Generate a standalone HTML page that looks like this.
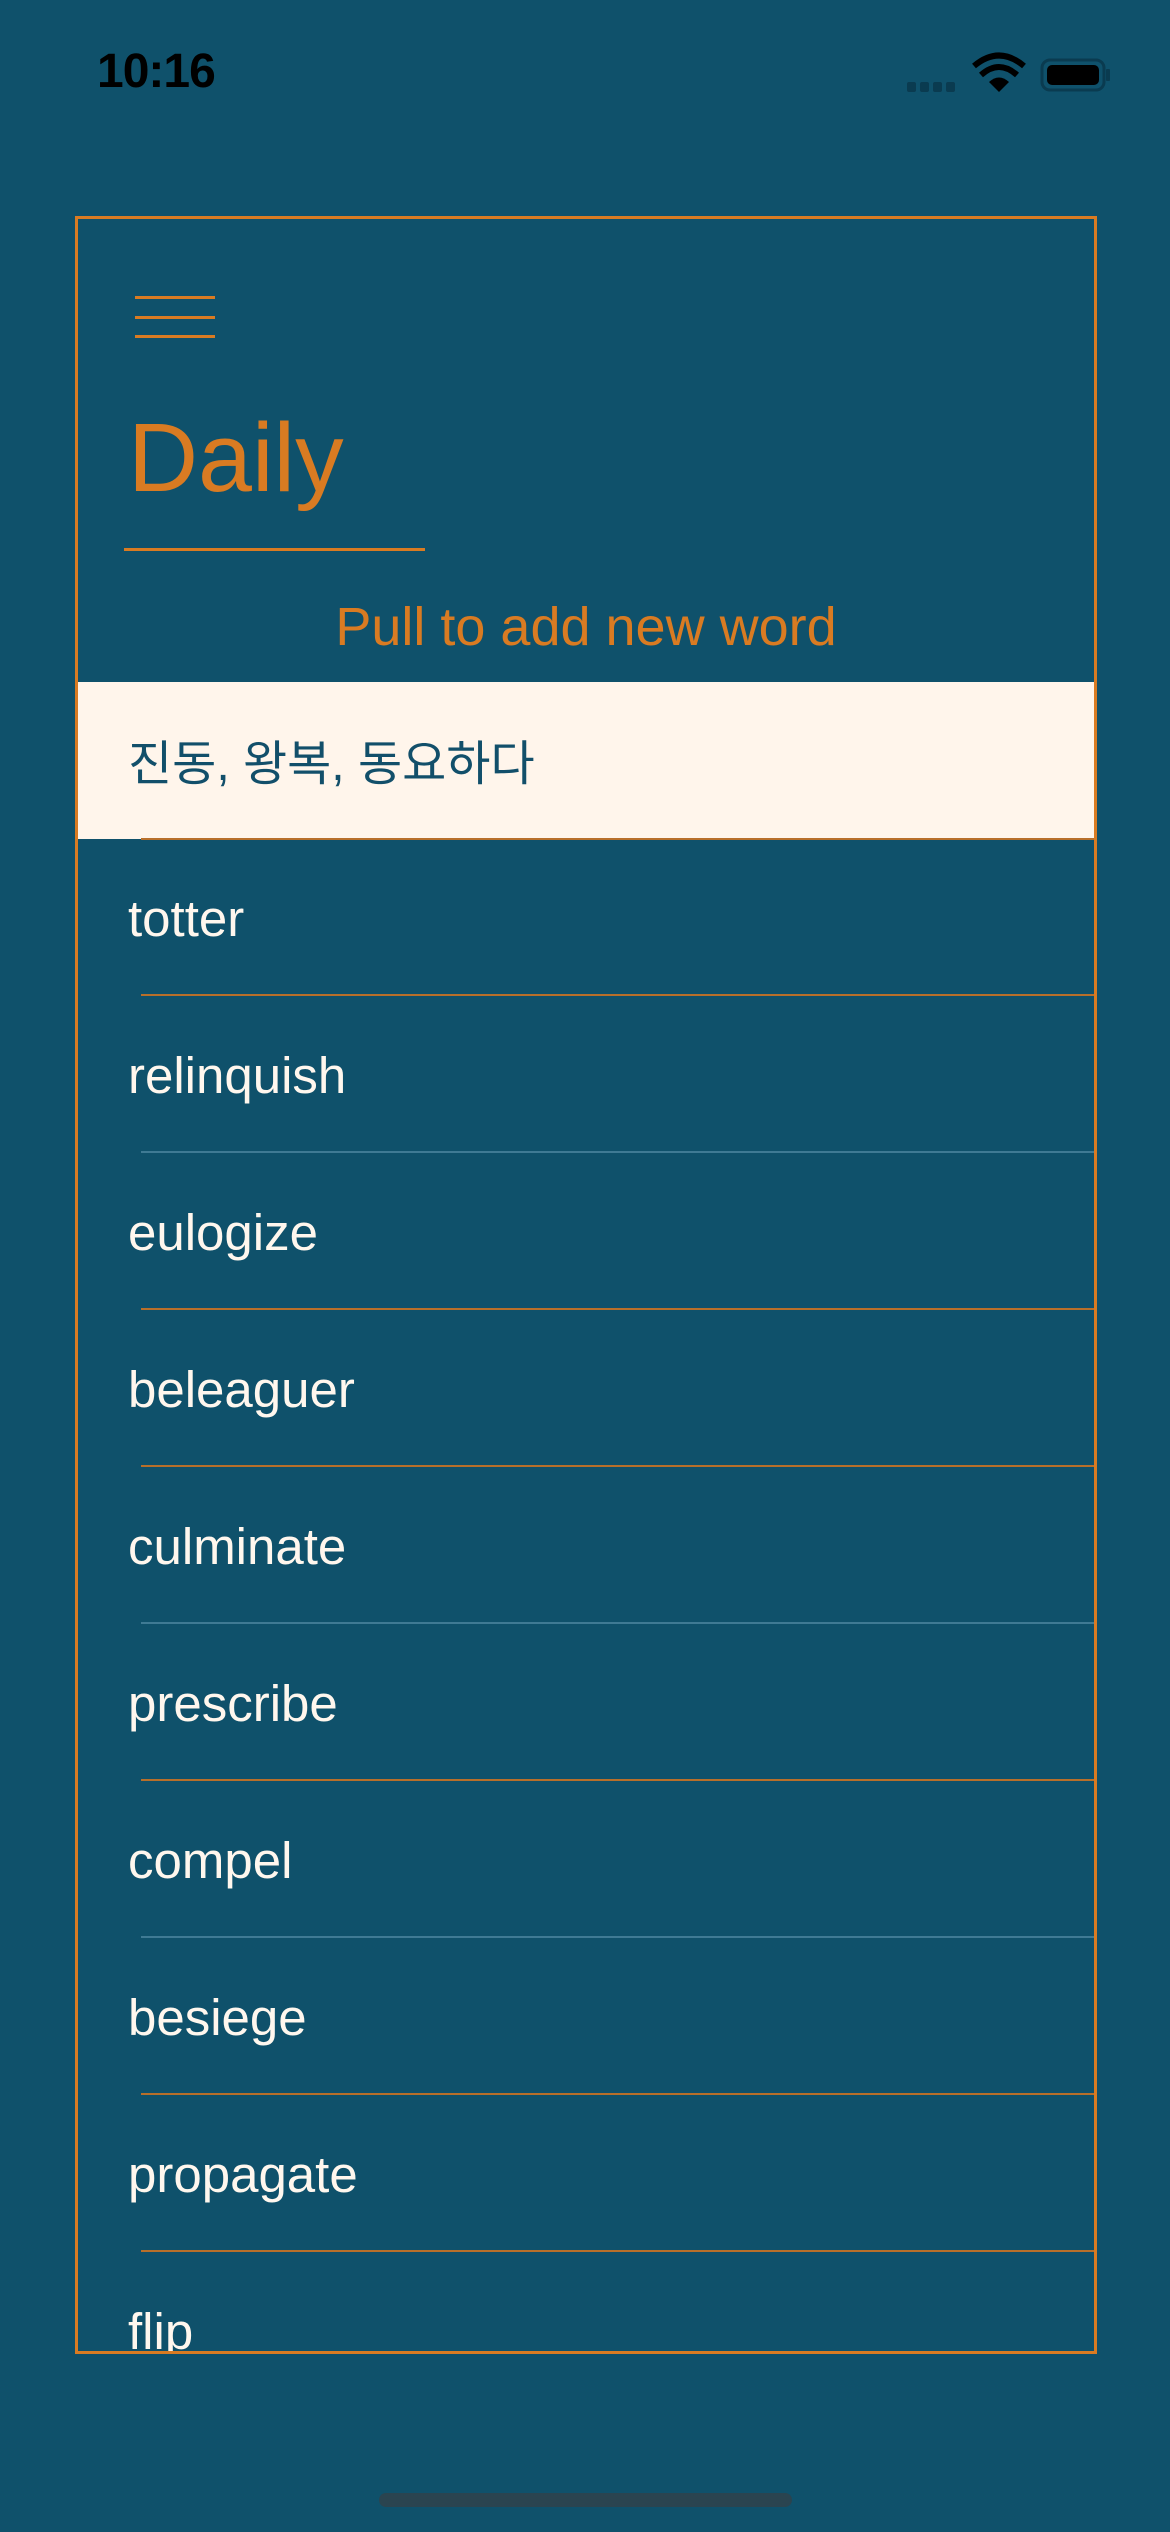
<!DOCTYPE html>
<html><head><meta charset="utf-8"><style>
html,body{margin:0;padding:0}
body{width:1170px;height:2532px;background:#0f516b;position:relative;overflow:hidden;font-family:"Liberation Sans","Noto Sans CJK KR",sans-serif}
.abs{position:absolute}
.time{left:97px;top:44px;font-size:48px;font-weight:bold;color:#000;letter-spacing:-1px}
.box{left:75px;top:216px;width:1016px;height:2132px;border:3px solid #d97b22;overflow:hidden}
.hl{background:#d97b22;height:3px;width:80px;left:57px}
.daily{left:50px;top:190px;font-size:97px;color:#d97b22;font-weight:300;line-height:1}
.uline{left:46px;top:329px;width:301px;height:3px;background:#d97b22}
.pull{left:0;width:1016px;text-align:center;top:381px;font-size:54px;color:#d97b22;line-height:1}
.row{left:0;width:1016px;height:157px}
.row span{position:absolute;left:50px;top:54px;font-size:51px;line-height:1;color:#fff7ee}
.sep{left:63px;width:953px;height:2px;background:#b86f2a}
.sep.b{background:#3f7a94}
</style></head><body>
<div class="abs time">10:16</div>
<svg class="abs" style="left:900px;top:52px" width="220" height="44" viewBox="0 0 220 44">
<g fill="#0a3b50"><rect x="7" y="30" width="9" height="10" rx="2"/><rect x="20" y="30" width="9" height="10" rx="2"/><rect x="33" y="30" width="9" height="10" rx="2"/><rect x="46" y="30" width="9" height="10" rx="2"/></g>
<path d="M99 40 L89 30 Q99 21 109 30 Z" fill="#000"/>
<path d="M81 23 Q99 7 117 23" stroke="#000" stroke-width="6" fill="none"/>
<path d="M74 14 Q99 -7 124 14" stroke="#000" stroke-width="6" fill="none"/>
<rect x="142" y="8" width="62" height="30" rx="8" fill="none" stroke="#0a3b50" stroke-width="3"/>
<rect x="147" y="13" width="52" height="20" rx="5" fill="#000"/>
<rect x="206" y="17" width="4" height="12" rx="1" fill="#0a3b50"/>
</svg>
<div class="abs box">
<div class="abs hl" style="top:77px"></div>
<div class="abs hl" style="top:97px"></div>
<div class="abs hl" style="top:116px"></div>
<div class="abs daily">Daily</div>
<div class="abs uline"></div>
<div class="abs pull">Pull to add new word</div>
<div class="abs row" style="top:463px;background:#fff5eb"><span style="color:#124f6a;top:59px;font-size:48px">진동, 왕복, 동요하다</span></div>
<div class="abs sep" style="top:619px"></div>
<div class="abs row" style="top:620px"><span>totter</span></div>
<div class="abs sep" style="top:775px"></div>
<div class="abs row" style="top:777px"><span>relinquish</span></div>
<div class="abs sep b" style="top:932px"></div>
<div class="abs row" style="top:934px"><span>eulogize</span></div>
<div class="abs sep" style="top:1089px"></div>
<div class="abs row" style="top:1091px"><span>beleaguer</span></div>
<div class="abs sep" style="top:1246px"></div>
<div class="abs row" style="top:1248px"><span>culminate</span></div>
<div class="abs sep b" style="top:1403px"></div>
<div class="abs row" style="top:1405px"><span>prescribe</span></div>
<div class="abs sep" style="top:1560px"></div>
<div class="abs row" style="top:1562px"><span>compel</span></div>
<div class="abs sep b" style="top:1717px"></div>
<div class="abs row" style="top:1719px"><span>besiege</span></div>
<div class="abs sep" style="top:1874px"></div>
<div class="abs row" style="top:1876px"><span>propagate</span></div>
<div class="abs sep" style="top:2031px"></div>
<div class="abs row" style="top:2033px"><span>flip</span></div>
</div>
<div class="abs" style="left:379px;top:2493px;width:413px;height:14px;border-radius:7px;background:#2a4450"></div>
</body></html>
